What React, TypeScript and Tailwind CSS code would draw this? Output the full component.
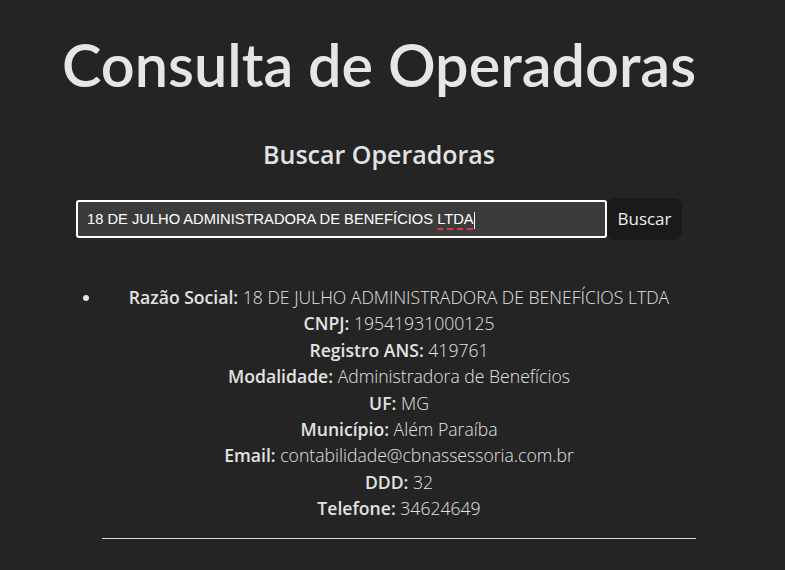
import React from "react";

const fields: [string, string][] = [
  ["Razão Social:", "18 DE JULHO ADMINISTRADORA DE BENEFÍCIOS LTDA"],
  ["CNPJ:", "19541931000125"],
  ["Registro ANS:", "419761"],
  ["Modalidade:", "Administradora de Benefícios"],
  ["UF:", "MG"],
  ["Município:", "Além Paraíba"],
  ["Email:", "contabilidade@cbnassessoria.com.br"],
  ["DDD:", "32"],
  ["Telefone:", "34624649"],
];

export default function App() {
  return (
    <div
      className="min-h-[570px] w-full bg-[#242424] text-[#e2e2e2] overflow-hidden"
      style={{ fontFamily: '"Open Sans", "Noto Sans", sans-serif' }}
    >
      <div className="ml-[62px] w-[634px] pt-[29px] text-center">
        <h1
          className="text-[59.4px] leading-[70px] font-semibold whitespace-nowrap text-[#e6e6e6]"
          style={{ fontFamily: 'Lato, "Open Sans", sans-serif' }}
        >
          Consulta de Operadoras
        </h1>
        <h2 className="mt-[39px] text-[25px] leading-[32px] font-semibold">
          Buscar Operadoras
        </h2>
        <div className="mt-[28px] flex items-center justify-center">
          <div
            className="h-[38px] w-[531px] rounded-[3px] border-2 border-white bg-[#3b3b3b] pl-[9px] text-left text-[14.7px] leading-[34px] text-white whitespace-nowrap"
            style={{ fontFamily: '"Liberation Sans", Arial, sans-serif' }}
          >
            18 DE JULHO ADMINISTRADORA DE BENEFÍCIOS{" "}
            <span className="underline decoration-dashed decoration-[#e0383e] decoration-2 underline-offset-[4px]">
              LTDA
            </span>
            <span className="inline-block h-[17px] w-px bg-white align-middle" />
          </div>
          <button className="h-[42px] w-[75px] rounded-[8px] bg-[#1a1a1a] text-[17px] text-[#eeeeee]">
            Buscar
          </button>
        </div>
        <ul className="mt-[44px] list-disc pl-[40px]">
          <li className="text-[17.6px] leading-[26.4px]">
            {fields.map(([k, v]) => (
              <div key={k}>
                <span className="font-semibold">{k}</span>{" "}
                <span className="font-light">{v}</span>
              </div>
            ))}
            <div className="mt-[16px] border-t border-[#d8d8d8]" />
          </li>
        </ul>
      </div>
    </div>
  );
}
